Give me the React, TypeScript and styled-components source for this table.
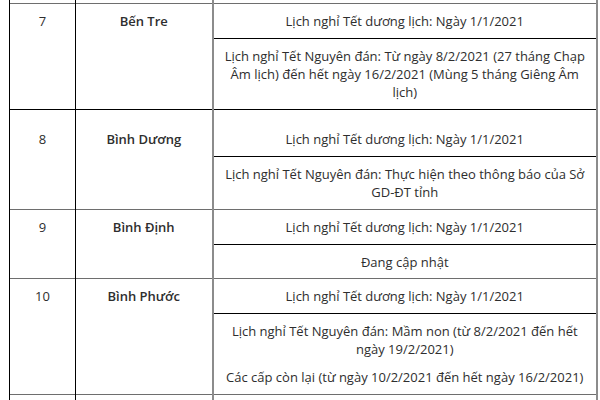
import React from 'react';
import styled, { createGlobalStyle } from 'styled-components';

const GlobalStyle = createGlobalStyle`
  html, body {
    margin: 0;
    padding: 0;
    background: #fff;
    overflow: hidden;
  }
  body {
    font-family: "Open Sans", "Noto Sans", sans-serif;
    color: #2e2e2e;
  }
`;

const GRAY = '#8c8c8c';

const Page = styled.div`
  padding-left: 9px;
  width: 600px;
  height: 400px;
  box-sizing: border-box;
`;

const Table = styled.table`
  border-collapse: collapse;
  table-layout: fixed;
  width: 589px;
  font-size: 13px;
  line-height: 18px;
`;

const Row = styled.tr<{ $sep?: 'gray' | 'black' }>`
  & > td {
    border-top: ${(p) => (p.$sep === 'gray' ? '1px solid #6e6e6e' : p.$sep === 'black' ? '1px solid #000' : 'none')};
  }
`;

const Cell = styled.td<{ $col: 1 | 2 | 3; $bold?: boolean; $padTop?: number; $padBottom?: number }>`
  padding: ${(p) => p.$padTop ?? 8}px 10px ${(p) => p.$padBottom ?? 8}px;
  vertical-align: top;
  text-align: center;
  font-weight: ${(p) => (p.$bold ? 600 : 400)};
  border-left: ${(p) => (p.$col === 3 ? `2px solid ${GRAY}` : '1px solid #000')};
  border-right: ${(p) => (p.$col === 1 ? '1px solid #000' : `2px solid ${GRAY}`)};
`;

const Spacer = styled.td<{ $h: number; $col: 1 | 2 | 3 }>`
  height: ${(p) => p.$h}px;
  padding: 0;
  border-left: ${(p) => (p.$col === 3 ? `2px solid ${GRAY}` : '1px solid #000')};
  border-right: ${(p) => (p.$col === 1 ? '1px solid #000' : `2px solid ${GRAY}`)};
`;

const Para = styled.p`
  margin: 0;
  & + & {
    margin-top: 10px;
  }
`;

type Province = {
  no: string;
  name: string;
  sep: 'gray' | 'black';
  padTop?: number;
  padBottom?: number;
  lunar: string[];
};

const solar = 'Lịch nghỉ Tết dương lịch: Ngày 1/1/2021';

const provinces: Province[] = [
  {
    no: '7',
    name: 'Bến Tre',
    sep: 'gray',
    lunar: [
      'Lịch nghỉ Tết Nguyên đán: Từ ngày 8/2/2021 (27 tháng Chạp Âm lịch) đến hết ngày 16/2/2021 (Mùng 5 tháng Giêng Âm lịch)',
    ],
  },
  {
    no: '8',
    name: 'Bình Dương',
    sep: 'black',
    padTop: 20,
    lunar: ['Lịch nghỉ Tết Nguyên đán: Thực hiện theo thông báo của Sở GD-ĐT tỉnh'],
  },
  {
    no: '9',
    name: 'Bình Định',
    sep: 'gray',
    padBottom: 7,
    lunar: ['Đang cập nhật'],
  },
  {
    no: '10',
    name: 'Bình Phước',
    sep: 'gray',
    lunar: [
      'Lịch nghỉ Tết Nguyên đán: Mầm non (từ 8/2/2021 đến hết ngày 19/2/2021)',
      'Các cấp còn lại (từ ngày 10/2/2021 đến hết ngày 16/2/2021)',
    ],
  },
];

const App: React.FC = () => (
  <>
    <GlobalStyle />
    <Page>
      <Table>
        <colgroup>
          <col style={{ width: 66 }} />
          <col style={{ width: 137 }} />
          <col />
        </colgroup>
        <tbody>
          <Row>
            <Spacer $h={3} $col={1} />
            <Spacer $h={3} $col={2} />
            <Spacer $h={3} $col={3} />
          </Row>
          {provinces.map((p) => (
            <React.Fragment key={p.no}>
              <Row $sep={p.sep}>
                <Cell $col={1} rowSpan={2} $padTop={p.padTop}>
                  {p.no}
                </Cell>
                <Cell $col={2} rowSpan={2} $bold $padTop={p.padTop}>
                  {p.name}
                </Cell>
                <Cell $col={3} $padTop={p.padTop}>
                  {solar}
                </Cell>
              </Row>
              <Row $sep="black">
                <Cell $col={3} $padBottom={p.padBottom}>
                  {p.lunar.map((t) => (
                    <Para key={t}>{t}</Para>
                  ))}
                </Cell>
              </Row>
            </React.Fragment>
          ))}
          <Row $sep="gray">
            <Spacer $h={20} $col={1} />
            <Spacer $h={20} $col={2} />
            <Spacer $h={20} $col={3} />
          </Row>
        </tbody>
      </Table>
    </Page>
  </>
);

export default App;
